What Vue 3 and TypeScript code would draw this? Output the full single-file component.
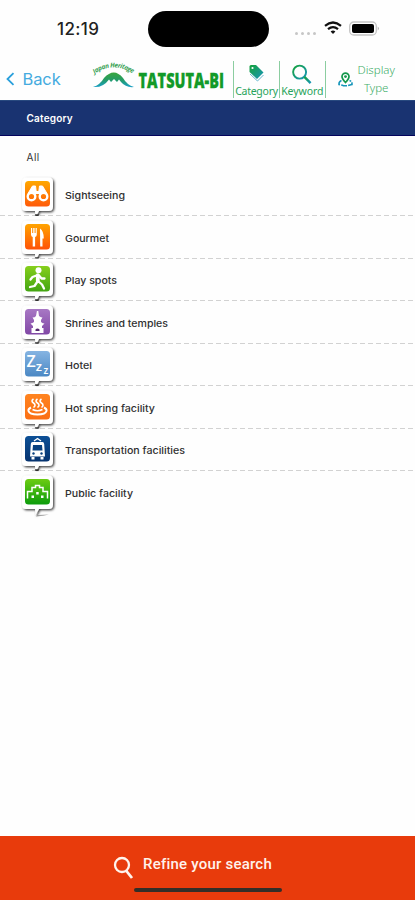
<script setup lang="ts">
interface Category {
  id: string
  label: string
  width: number
  top: string
  bottom: string
}

const categories: Category[] = [
  { id: 'sight', label: 'Sightseeing', width: 60, top: '#ffa800', bottom: '#ff5a0a' },
  { id: 'food', label: 'Gourmet', width: 44, top: '#ffa400', bottom: '#ff5208' },
  { id: 'play', label: 'Play spots', width: 52, top: '#86cf1c', bottom: '#43a512' },
  { id: 'shrine', label: 'Shrines and temples', width: 103, top: '#a878c4', bottom: '#8148a6' },
  { id: 'hotel', label: 'Hotel', width: 27, top: '#86b4e2', bottom: '#4b88c4' },
  { id: 'spring', label: 'Hot spring facility', width: 90, top: '#ff8420', bottom: '#fb6f14' },
  { id: 'transport', label: 'Transportation facilities', width: 120, top: '#0d5096', bottom: '#06336f' },
  { id: 'public', label: 'Public facility', width: 68, top: '#6ccc12', bottom: '#0c9c0c' },
]
</script>

<template>
  <div class="screen">
    <div class="status">
      <span class="time">12:19</span>
      <div class="island"></div>
      <div class="signals">
        <span class="dots"><i v-for="n in 4" :key="n"></i></span>
        <svg class="wifi" width="18" height="14" viewBox="0 0 18 14" fill="none" stroke="#111" stroke-width="2.2">
          <path d="M1 4.8Q9-1.8 17 4.8M4 8.2q5-4.2 10 0" />
          <path d="M6.6 10.6q2.4-2 4.8 0L9 13z" fill="#111" stroke="none" />
        </svg>
        <svg class="battery" width="31" height="15" viewBox="0 0 31 15">
          <rect x=".7" y="1" width="26.6" height="13" rx="4" fill="#fff" stroke="#c4c4c4" stroke-width="1.3" />
          <rect x="3" y="3" width="22" height="9" rx="2" fill="#000" />
          <path d="M28.7 5.5q2.6 2 0 4z" fill="#b5b5b5" />
        </svg>
      </div>
    </div>

    <header class="header">
      <a class="back">
        <svg width="9" height="14" viewBox="0 0 9 14" fill="none" stroke="#2aa0dc" stroke-width="1.8"><path d="M7.5 1.2 1.5 7l6 5.8" /></svg>
        <span>Back</span>
      </a>
      <div class="brand">
        <svg width="138" height="38" viewBox="-2 -4 138 38">
          <defs>
            <linearGradient id="hill" x1="0" y1="0" x2="0" y2="1">
              <stop offset="0" stop-color="#39a63c" /><stop offset=".5" stop-color="#249b65" /><stop offset="1" stop-color="#1ba0c8" />
            </linearGradient>
            <path id="arc" d="M1.500 12Q21-2 42 13" />
          </defs>
          <text class="heritage"><textPath href="#arc" textLength="41">Japan Heritage</textPath></text>
          <path d="M0 25Q7 23 11 16Q21 5 30 16Q34 23 41 25Q33 26 28 20L26 17.500 24 20 21 17 18 20 16 17.500Q10 26 0 25z" fill="url(#hill)" />
          <text class="wordmark" transform="translate(45.500 25.500) scale(1 1.420)" textLength="85.500" lengthAdjust="spacingAndGlyphs">TATSUTA-BI</text>
        </svg>
      </div>
      <div class="tool category-tool">
        <svg width="17" height="18" viewBox="0 0 17 18">
          <defs><linearGradient id="ink" x1="0" y1="0" x2="1" y2="1"><stop offset="0" stop-color="#16a23b" /><stop offset="1" stop-color="#1695ba" /></linearGradient></defs>
          <path d="M1.500 2.500Q1.500 1 3 1H8L15.500 8.500 9 15 1.500 8z" fill="url(#ink)" />
          <path d="M2 10 9.500 17 15.500 11" fill="none" stroke="#64b7cf" />
          <circle cx="4.500" cy="4" r="1.100" fill="#fff" />
        </svg>
        <span class="tag-text">Category</span>
      </div>
      <div class="tool keyword-tool">
        <svg width="22" height="22" viewBox="0 0 22 22" fill="none" stroke="url(#ink)"><circle cx="8.500" cy="8.500" r="6.800" stroke-width="2" /><path d="m13.500 13.500 6.500 6.500" stroke-width="2.600" /></svg>
        <span class="tag-text">Keyword</span>
      </div>
      <div class="display">
        <svg width="15" height="15" viewBox="0 0 15 15">
          <path d="M7.500 1.100a3.500 3.500 0 0 1 3.500 3.500Q11 7 7.500 10.500 4 7 4 4.600a3.500 3.500 0 0 1 3.500-3.500z" fill="none" stroke="#14984c" stroke-width="1.700" />
          <circle cx="7.500" cy="4.600" r="1.400" fill="#14984c" />
          <path d="M3.500 8.500Q.8 9.500 1 12.500q2.500.5 4.500 1.200h4q2-.7 4.500-1.200.2-3-2.500-4" fill="none" stroke="#1695ba" stroke-width="1.600" stroke-dasharray="6 1.200" />
        </svg>
        <span>Display<br />Type</span>
      </div>
    </header>

    <div class="title">Category</div>

    <main class="list">
      <div class="all">All</div>
      <div v-for="c in categories" :key="c.id" class="row">
        <svg class="pin" width="38" height="45" viewBox="0 0 38 45">
          <defs>
            <linearGradient :id="'g-' + c.id" x1="0" y1="0" x2="0" y2="1">
              <stop offset="0" :stop-color="c.top" /><stop offset="1" :stop-color="c.bottom" />
            </linearGradient>
            <filter :id="'s-' + c.id" x="-20%" y="-20%" width="150%" height="150%">
              <feDropShadow dx="1.300" dy="1.300" stdDeviation="1.100" flood-color="#000" flood-opacity=".75" />
            </filter>
          </defs>
          <path :filter="`url(#s-${c.id})`" d="M6 1.500H28.500Q33 1.500 33 6V30.500Q33 35 28.500 35H19L15.500 41 15 35H6Q2 35 2 31V6Q2 1.500 6 1.500z" fill="#fff" />
          <path v-if="c.id === 'public'" d="M16 42.500 19 37.500 18 41 29 40.500Q24 42 16 42.500z" fill="#777" opacity=".65" />
          <path v-else d="M15 38.200h4.300l-1 1.800h-3z" fill="#333" />
          <rect x="5" y="5" width="25" height="25.500" rx="3.500" :fill="`url(#g-${c.id})`" />

          <g v-if="c.id === 'sight'" fill="none" stroke="#fff">
            <circle cx="11.500" cy="20.500" r="3.800" stroke-width="2.400" /><circle cx="23.500" cy="20.500" r="3.800" stroke-width="2.400" />
            <path d="m8 17.500 4.500-7.500h3l1 8M27 17.500 22.500 10h-3l-1 8" fill="#fff" stroke-width="1" /><path d="M15 16.500h5" stroke-width="3" />
          </g>
          <g v-else-if="c.id === 'food'" fill="#fff">
            <path d="M11 9h1.200v5h1V9h1.400v5h1V9h1.200v6.500q0 2-1.700 2.500v9.500h-2.400V18Q11 17.500 11 15.500zM20 9.500q3.800 2.500 3.800 10h-1.300v8h-2.300z" />
          </g>
          <g v-else-if="c.id === 'play'" fill="none" stroke="#fff" stroke-linecap="round" stroke-linejoin="round">
            <circle cx="18.500" cy="9.300" r="3" fill="#fff" stroke="none" /><path d="M17.800 14.200v5.500" stroke-width="3.800" /><path d="M16.500 14.500 12.500 16 10.500 18.500M19 14.500l2.500 3h3M17.500 20.500 14.500 25l-4.500 1M18.500 20.500l3.500 3 2 4" stroke-width="2.300" />
          </g>
          <g v-else-if="c.id === 'shrine'" fill="#fff">
            <path d="M16.900 7h1.400l.7 5q2 1.500 3.500 1.500L21 16v2q2 1.500 3.500 1.500L22 22v2h1.500v5h-12v-5H13v-2l-2.500-2.500Q12.500 19 14 18v-2l-1.500-2.500Q15 13.500 16 12z" /><path d="M15.500 27v-1.500q2-2 4 0V27z" fill="#54286f" />
          </g>
          <g v-else-if="c.id === 'hotel'" class="zz"><text x="6.500" y="20.500" font-size="16">Z</text><text x="15.800" y="24.500" font-size="13">z</text><text x="23.500" y="28" font-size="10">z</text></g>
          <g v-else-if="c.id === 'spring'" fill="none" stroke="#fff">
            <path d="M11 18.500q-3 1.500-2.500 3.500 1 3.500 9 3.500t9-3.500q.5-2-2.500-3.500" stroke-width="2" /><path d="M12.500 20.500q5 2.500 10 0M13.500 10q-3 2 0 4t0 4.500M17.500 10q-3 2 0 4t0 4.500M21.500 10q-3 2 0 4t0 4.500" stroke-width="1.600" />
          </g>
          <g v-else-if="c.id === 'transport'">
            <path d="m14 10 3.500-2.500L21 10" fill="none" stroke="#fff" stroke-width="1.400" /><path d="M12.500 11h10q1.500 0 1.700 2l.8 12.500H10L10.800 13q.2-2 1.700-2zM11.500 26h3v2.500h-3zM20.500 26h3v2.500h-3z" fill="#fff" />
            <path d="M13 14h9l.5 5.500h-10z" fill="#08407f" /><circle cx="13.500" cy="22.500" r="1.200" fill="#08407f" /><circle cx="21.500" cy="22.500" r="1.200" fill="#08407f" />
          </g>
          <g v-else>
            <path d="M7.500 24.500V17.500H12v-4h3.500v-2h4v2H23v4h4.500v7" fill="none" stroke="#fff" stroke-width="1.500" /><path d="M11.500 21.500h2.500V24h-2.500zM16.200 18h2.500v2.500h-2.500zM21 21.500h2.500V24H21z" fill="#fff" />
          </g>
        </svg>
        <svg class="label" width="140" height="16"><text y="11.500" :textLength="c.width" lengthAdjust="spacingAndGlyphs">{{ c.label }}</text></svg>
      </div>
    </main>

    <footer class="footer">
      <div class="search">
        <svg width="22" height="24" viewBox="0 0 22 24" fill="none" stroke="#fff4ed" stroke-width="2.300"><circle cx="9" cy="9" r="7" /><path d="m13 14.500 6 7.500" stroke-width="2.800" /></svg>
        <span>Refine your search</span>
      </div>
      <div class="home"></div>
    </footer>
  </div>
</template>

<style>
body { background: #fff; }
</style>

<style scoped>
* { box-sizing: border-box; }
.screen { width: 415px; height: 900px; display: flex; flex-direction: column; background: #fefefe; font-family: Inter, Roboto, sans-serif; overflow: hidden; }
.status { height: 58px; display: flex; align-items: flex-start; flex: none; }
.time { width: 147.500px; padding: 19px 0 0 57px; font-size: 17px; line-height: 20px; font-weight: 500; letter-spacing: .35px; color: #222; }
.island { width: 121px; height: 36px; margin-top: 11px; border-radius: 18px; background: #000; }
.signals { display: flex; padding: 21px 0 0 26px; }
.dots { display: flex; gap: 2.500px; padding-top: 10.500px; width: 29px; }
.dots i { width: 3.500px; height: 3.500px; border-radius: 2px; background: #c6c6c6; }
.battery { margin-left: 7px; }
.header { height: 41.500px; flex: none; display: flex; align-items: flex-start; }
.back { width: 90.500px; padding: 11px 0 0 6px; display: flex; align-items: center; gap: 7.500px; color: #45abdf; font-size: 16.500px; line-height: 20px; letter-spacing: -.1px; }
.brand { width: 142.500px; padding-top: 0; }
.brand svg { overflow: visible; }
.heritage { font: italic 700 6.500px "Open Sans", sans-serif; fill: #35a052; }
.wordmark { font: 800 14.500px "Open Sans", sans-serif; fill: #129a28; stroke: #129a28; stroke-width: .2px; }
.tool { height: 37px; margin-top: 3px; border-left: 1px solid #8bcda0; display: flex; flex-direction: column; align-items: center; justify-content: space-between; }
.category-tool { width: 46px; padding-top: 3px; }
.keyword-tool { width: 46.500px; border-right: 1px solid #8bcda0; padding-top: 3px; }
.tag-text { font: 400 10.500px/13px "Noto Sans", sans-serif; color: #28a35b; white-space: nowrap; }
.category-tool .tag-text { letter-spacing: -.25px; }
.keyword-tool .tag-text { letter-spacing: -.1px; }
.display { padding: 3px 0 0 12px; display: flex; align-items: center; gap: 5px; font: 300 11.500px/18px "Noto Sans", sans-serif; color: #40ad68; text-align: center; }
.title { height: 36.500px; flex: none; background: #193371; border-top: 1.500px solid #28497f; border-bottom: 1.500px solid #04045c; color: #fff; font-size: 10px; font-weight: 600; line-height: 34px; padding-left: 26.500px; letter-spacing: .2px; }
.list { flex: 1; }
.all { height: 38px; padding-left: 26.500px; font-size: 10px; line-height: 42px; letter-spacing: .5px; color: #333; }
.row { height: 42.550px; display: flex; background: repeating-linear-gradient(90deg, #d2d2d2 0 5px, transparent 5px 8px) 0 100% / 100% 1.400px no-repeat; }
.row:last-child { background: none; }
.pin { margin: 2px 0 -5px 20px; flex: none; }
.row:not(:last-child) .pin { clip-path: inset(0 0 5px 0); }
.label { margin: 13px 0 0 7px; }
.label text { font: 500 9.500px Inter, sans-serif; fill: #303030; }
.zz text { font-family: "Open Sans", sans-serif; font-weight: 600; fill: #fff; }
.footer { height: 64.500px; flex: none; background: #e83b0c; display: flex; flex-direction: column; }
.search { height: 52px; padding: 20px 0 0 112.500px; display: flex; gap: 8.500px; color: #fff2eb; font: 500 15px/17px Roboto, sans-serif; letter-spacing: .22px; }
.home { width: 148px; height: 4px; margin-left: 134px; border-radius: 2px; background: #322e28; }
</style>
